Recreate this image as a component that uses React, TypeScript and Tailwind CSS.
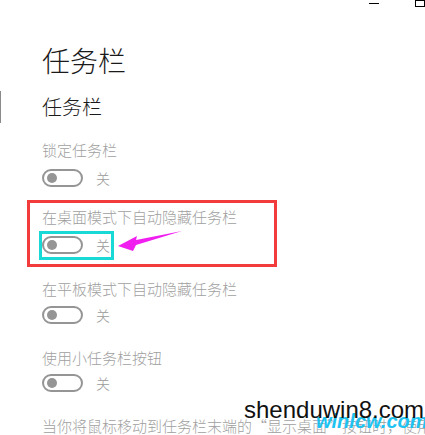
import React from "react";

const cjk = { fontFamily: "'Noto Sans CJK SC', 'Noto Sans', sans-serif" };

function Toggle() {
  return (
    <div className="flex items-center">
      <div className="flex h-[18px] w-[41px] shrink-0 items-center rounded-full border-2 border-[#959595] pl-[3px]">
        <div className="h-[10px] w-[10px] rounded-full bg-[#959595]" />
      </div>
      <span className="ml-[13px] text-[14px] leading-[18px] font-light text-[#9a9a9a]">关</span>
    </div>
  );
}

export default function App() {
  return (
    <div className="relative h-[435px] w-[425px] overflow-hidden bg-white" style={cjk}>
      {/* window chrome */}
      <div className="flex h-[10px] items-start justify-end">
        <div className="mt-[3px] h-px w-[10px] shrink-0 bg-black" />
        <div className="ml-[36px] h-[7px] w-[10px] shrink-0 border border-black" />
      </div>

      <div className="ml-[42px] mt-[36px] text-[28px] leading-[28px] font-light text-[#1a1a1a]">任务栏</div>

      <div className="mt-[17px] flex h-[32px] items-center">
        <div className="h-[32px] w-px bg-[#8a8a8a]" />
        <div className="ml-[41px] text-[20px] leading-[20px] font-light text-[#1a1a1a]">任务栏</div>
      </div>

      <div className="ml-[42px] mt-[19px] text-[15px] leading-[15px] font-light text-[#9f9f9f]">锁定任务栏</div>
      <div className="ml-[42px] mt-[12px]">
        <Toggle />
      </div>

      <div className="ml-[27px] mt-[13px] w-[250px] border-[3px] border-[#f23c3c] pb-[4px] pl-[12px] pt-[6px]">
        <div className="text-[15px] leading-[15px] font-light whitespace-nowrap text-[#9f9f9f]">在桌面模式下自动隐藏任务栏</div>
        <div className="ml-[-3px] mt-[7px] w-[75px] border-[3px] border-[#19d9d6] pb-[3px] pt-[2px]">
          <Toggle />
        </div>
      </div>

      <div className="ml-[42px] mt-[14px] text-[15px] leading-[15px] font-light text-[#9f9f9f]">在平板模式下自动隐藏任务栏</div>
      <div className="ml-[42px] mt-[10px]">
        <Toggle />
      </div>

      <div className="ml-[42px] mt-[26px] text-[15px] leading-[15px] font-light text-[#9f9f9f]">使用小任务栏按钮</div>
      <div className="ml-[42px] mt-[9px]">
        <Toggle />
      </div>

      <div className="ml-[42px] mt-[26px] whitespace-nowrap text-[15px] leading-[15px] font-light text-[#9f9f9f]">
        当你将鼠标移动到任务栏末端的“显示桌面”按钮时，使用“速览”预览桌面
      </div>

      {/* annotation arrow */}
      <svg className="absolute left-0 top-0" width="425" height="435" viewBox="0 0 425 435">
        <polygon points="118,246 137,236 136,240 182,231 136,245 133,251" fill="#f01ff0" />
      </svg>

      {/* watermark */}
      <div
        className="absolute left-[316px] top-[410px] text-[20px] leading-[22px] font-bold italic text-[#1ec3f2]"
        style={{ fontFamily: "'Liberation Sans', Arial, sans-serif" }}
      >
        winlcw.com
      </div>
      <div
        className="absolute left-[244px] top-[396px] text-[24px] leading-[28px] text-[#111]"
        style={{ fontFamily: "'Liberation Sans', Arial, sans-serif" }}
      >
        shenduwin8.com
      </div>
    </div>
  );
}
